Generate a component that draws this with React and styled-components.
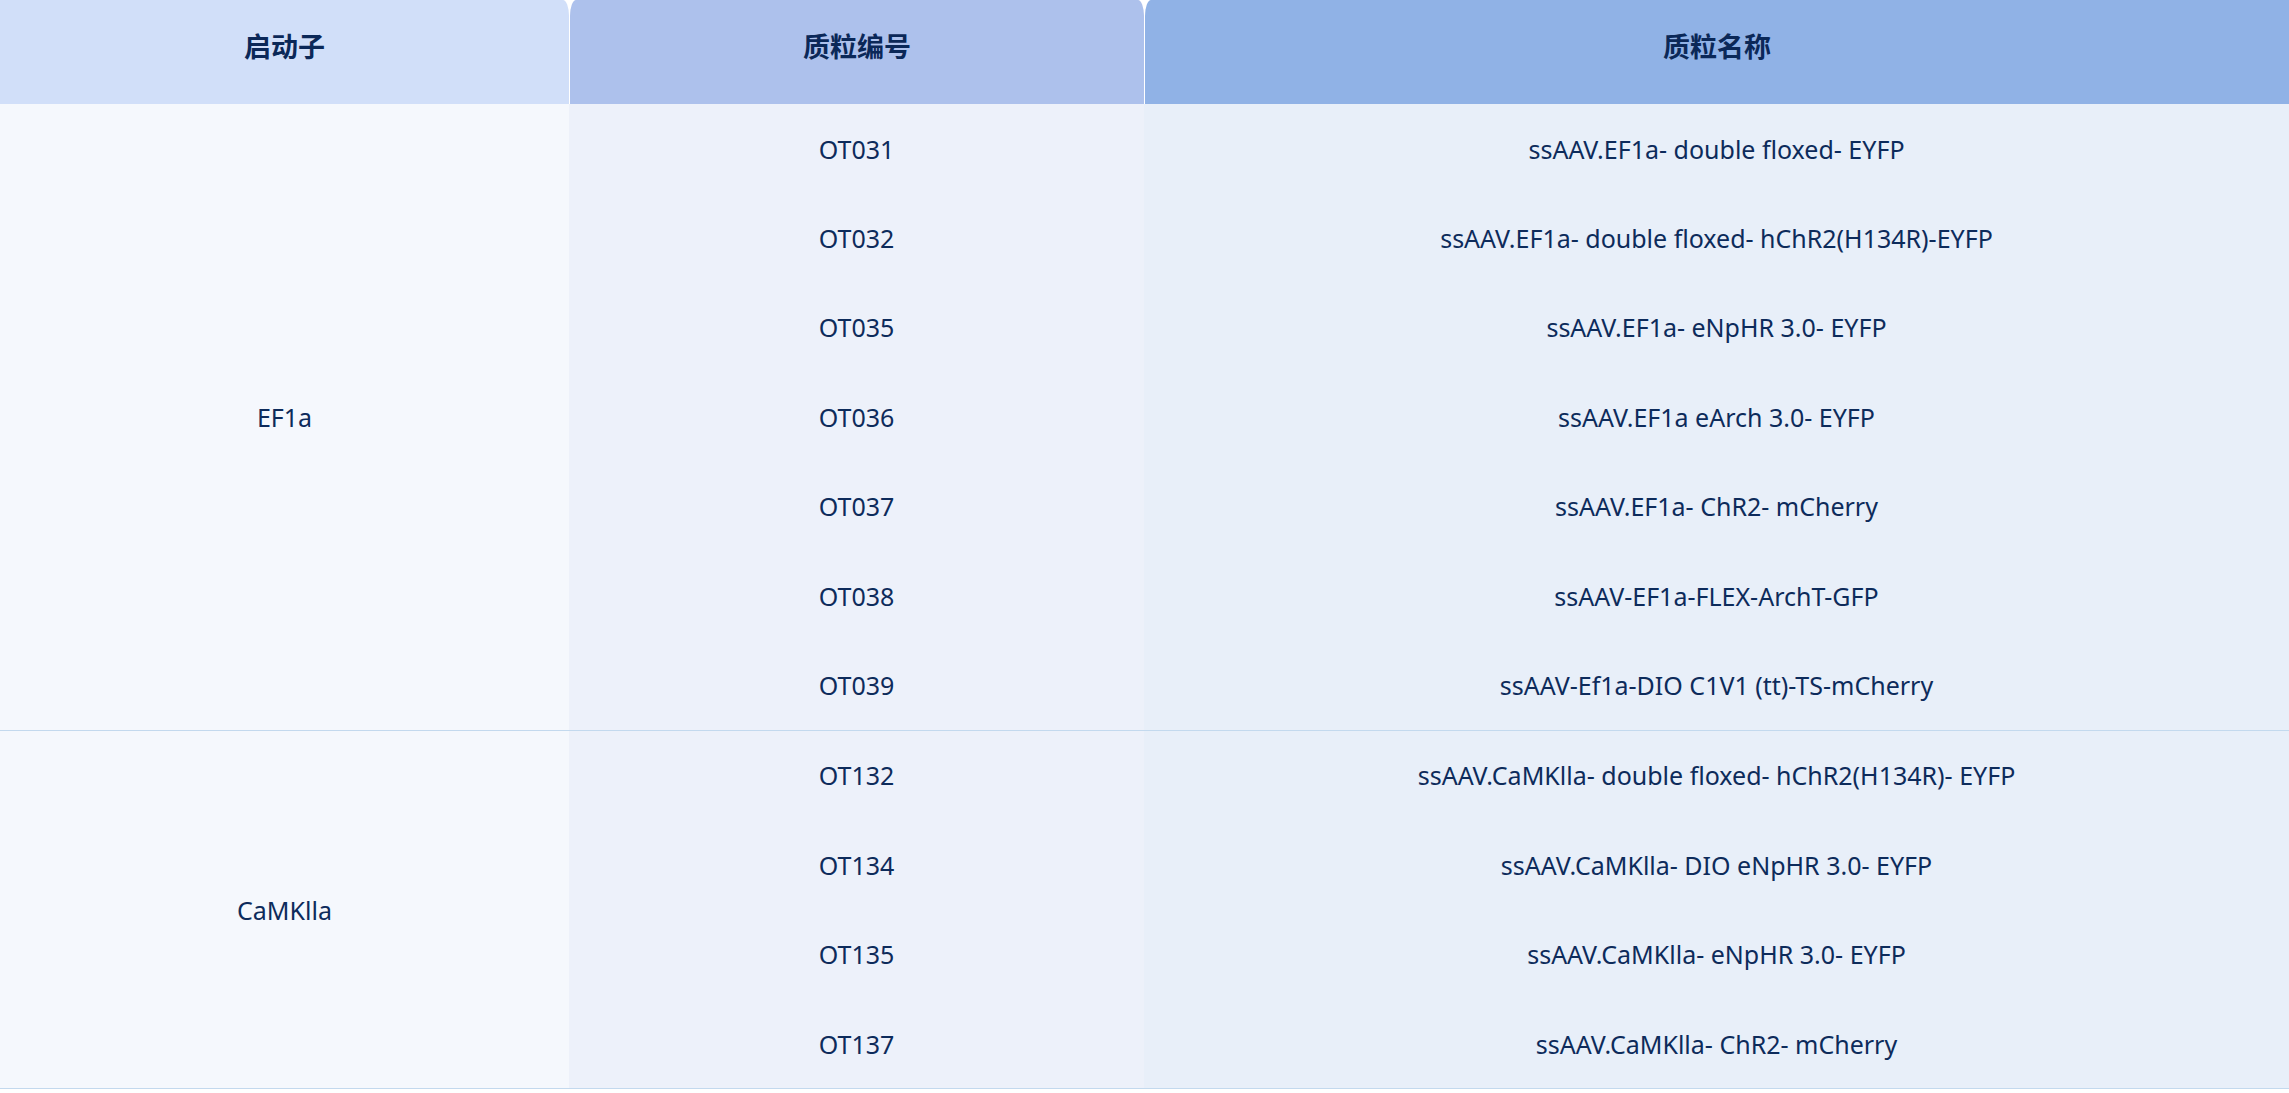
import React from "react";
import styled, { createGlobalStyle } from "styled-components";

const GlobalStyle = createGlobalStyle`
  html, body {
    margin: 0;
    padding: 0;
    background: #ffffff;
  }
  body {
    font-family: "Noto Sans", "Noto Sans CJK SC", sans-serif;
  }
`;

const COLS = "569px 575px 1fr";

const Table = styled.div`
  width: 100%;
  background: #ffffff;
`;

const HeadRow = styled.div`
  display: grid;
  grid-template-columns: ${COLS};
  height: 104px;
  background: #ffffff;
`;

const HeadCell = styled.div`
  display: flex;
  align-items: center;
  justify-content: center;
  padding-bottom: 14px;
  box-sizing: border-box;
  background: ${(p) => p.$bg};
  color: #0b2858;
  font-family: "Noto Sans CJK SC", "Noto Sans", sans-serif;
  font-weight: 700;
  font-size: 27px;
  border-top-left-radius: ${(p) => (p.$first ? "0" : "6px 16px")};
  border-top-right-radius: ${(p) => (p.$last ? "0" : "6px 16px")};
  margin-left: ${(p) => (p.$first ? "0" : "1px")};
`;

const Group = styled.div`
  display: grid;
  grid-template-columns: ${COLS};
  grid-auto-rows: 89.4px;
  border-bottom: 1px solid #c3d9ee;
`;

const Promoter = styled.div`
  grid-row: span ${(p) => p.$span};
  display: flex;
  align-items: center;
  justify-content: center;
  background: #f5f8fd;
  color: #0d2b5b;
  font-size: 25px;
`;

const Cell = styled.div`
  display: flex;
  align-items: center;
  justify-content: center;
  background: ${(p) => p.$bg};
  color: #0d2b5b;
  font-size: 25px;
  white-space: nowrap;
`;

const groups = [
  {
    promoter: "EF1a",
    items: [
      ["OT031", "ssAAV.EF1a- double floxed- EYFP"],
      ["OT032", "ssAAV.EF1a- double floxed- hChR2(H134R)-EYFP"],
      ["OT035", "ssAAV.EF1a- eNpHR 3.0- EYFP"],
      ["OT036", "ssAAV.EF1a eArch 3.0- EYFP"],
      ["OT037", "ssAAV.EF1a- ChR2- mCherry"],
      ["OT038", "ssAAV-EF1a-FLEX-ArchT-GFP"],
      ["OT039", "ssAAV-Ef1a-DIO C1V1 (tt)-TS-mCherry"],
    ],
  },
  {
    promoter: "CaMKlla",
    items: [
      ["OT132", "ssAAV.CaMKlla- double floxed- hChR2(H134R)- EYFP"],
      ["OT134", "ssAAV.CaMKlla- DIO eNpHR 3.0- EYFP"],
      ["OT135", "ssAAV.CaMKlla- eNpHR 3.0- EYFP"],
      ["OT137", "ssAAV.CaMKlla- ChR2- mCherry"],
    ],
  },
];

function App() {
  return (
    <>
      <GlobalStyle />
      <Table>
        <HeadRow>
          <HeadCell $first $bg="#d1dff9">启动子</HeadCell>
          <HeadCell $bg="#adc1ec">质粒编号</HeadCell>
          <HeadCell $last $bg="#90b2e6">质粒名称</HeadCell>
        </HeadRow>
        {groups.map((g) => (
          <Group key={g.promoter}>
            <Promoter $span={g.items.length}>{g.promoter}</Promoter>
            {g.items.map(([code, name]) => (
              <React.Fragment key={code}>
                <Cell $bg="#edf1fa">{code}</Cell>
                <Cell $bg="#e8eff9">{name}</Cell>
              </React.Fragment>
            ))}
          </Group>
        ))}
      </Table>
    </>
  );
}

export default App;
